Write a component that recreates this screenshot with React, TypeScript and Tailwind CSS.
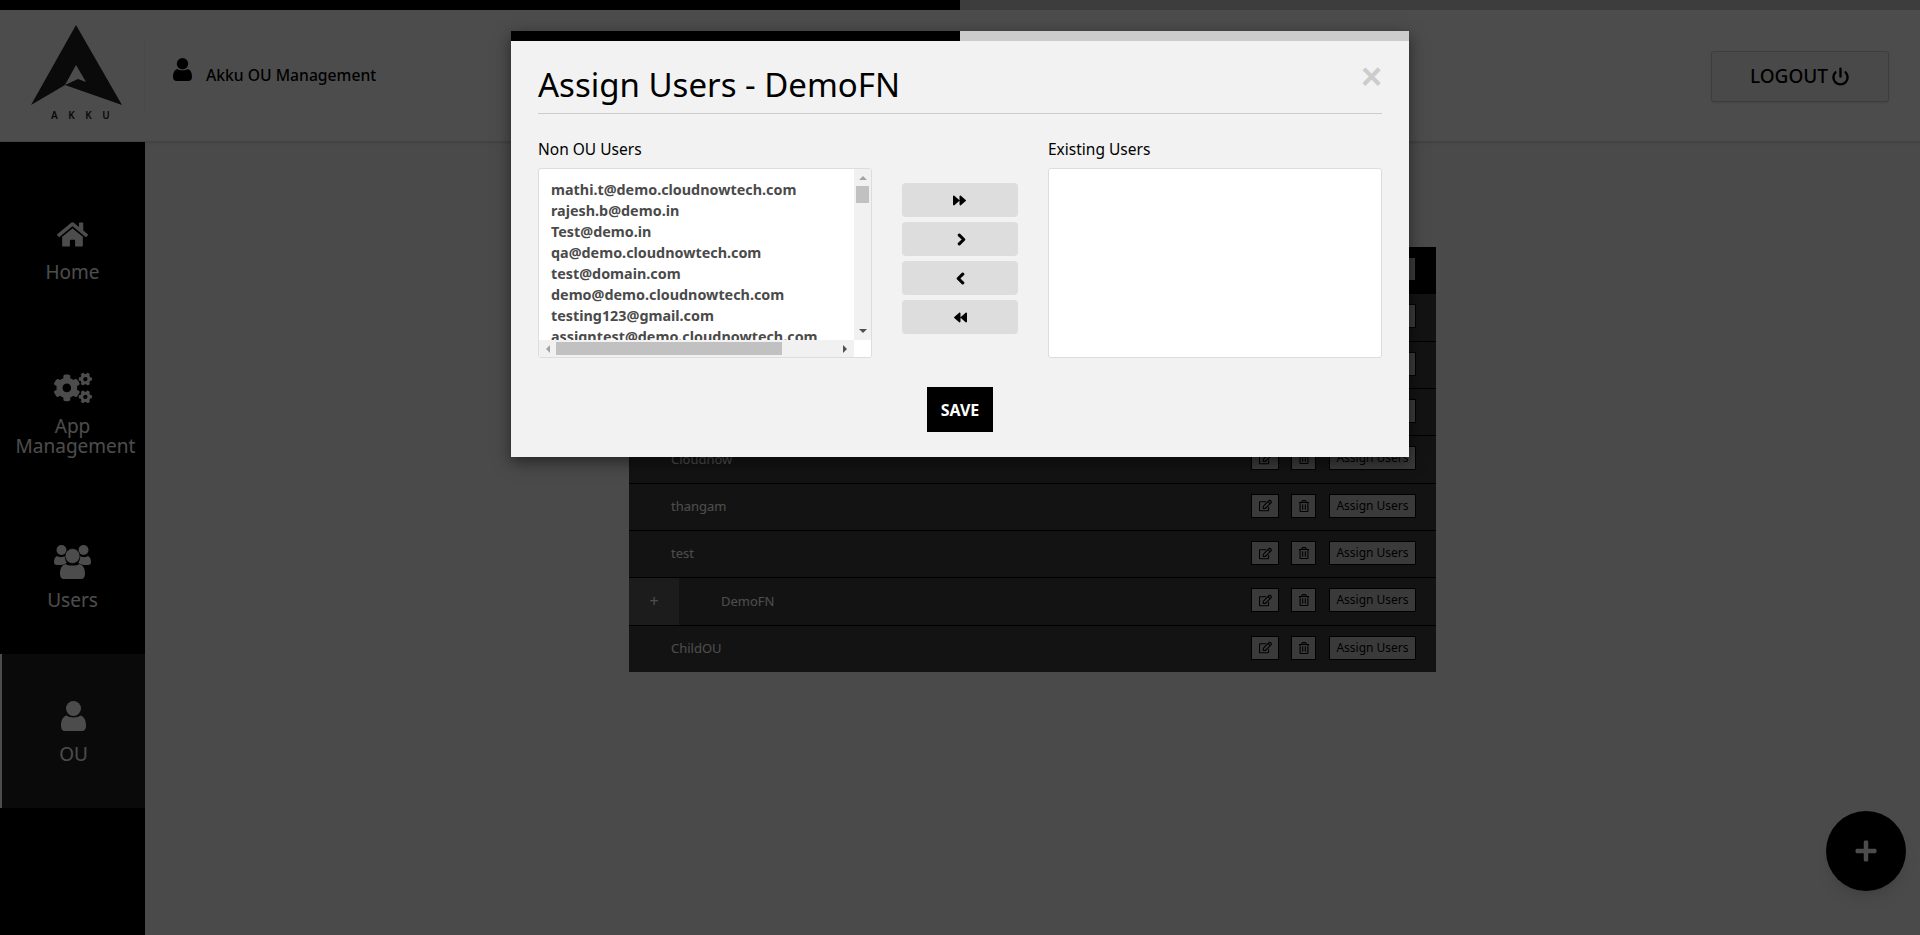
import { FaHome, FaCogs, FaRegEdit, FaRegTrashAlt, FaForward, FaBackward, FaChevronRight, FaChevronLeft, FaPlus } from "react-icons/fa";
import { FiPower } from "react-icons/fi";

const font = "font-['Noto_Sans',sans-serif]";

const emails = [
	"mathi.t@demo.cloudnowtech.com",
	"rajesh.b@demo.in",
	"Test@demo.in",
	"qa@demo.cloudnowtech.com",
	"test@domain.com",
	"demo@demo.cloudnowtech.com",
	"testing123@gmail.com",
	"assigntest@demo.cloudnowtech.com",
];

const rows = ["", "", "", "", "Cloudnow", "thangam", "test", "DemoFN", "ChildOU"];

function UserIcon({ className }: { className?: string }) {
	return (
		<svg viewBox="0 0 25 30" className={className} fill="currentColor">
			<circle cx="12.5" cy="7.5" r="7.5" />
			<path d="M5.5 14.5 C8 17 17 17 19.5 14.5 C23 15.5 25 19 25 25 C25 28 23.5 30 21 30 L4 30 C1.5 30 0 28 0 25 C0 19 2 15.5 5.5 14.5 Z" />
		</svg>
	);
}

function UsersIcon({ className }: { className?: string }) {
	return (
		<svg viewBox="0 0 37 34" className={className} fill="currentColor">
			<circle cx="7.5" cy="5" r="5" />
			<circle cx="29.5" cy="5" r="5" />
			<path d="M3 11 C5 12.5 9 12.5 11 11 C11 15 12 17 13 18 C10 19 8.5 20 7.5 20 L3 20 C1 20 0 19 0 17 C0 14 1 12 3 11 Z" />
			<path d="M34 11 C32 12.5 28 12.5 26 11 C26 15 25 17 24 18 C27 19 28.5 20 29.5 20 L34 20 C36 20 37 19 37 17 C37 14 36 12 34 11 Z" />
			<circle cx="18.5" cy="11" r="7.5" stroke="#000" strokeWidth="0.7" />
			<path d="M11.5 19 C14 21 23 21 25.5 19 C29 20 31 23 31 29 C31 32 29.5 34 27 34 L10 34 C7.5 34 6 32 6 29 C6 23 8 20 11.5 19 Z" />
		</svg>
	);
}

function NavItem({ icon, label, active }: { icon: React.ReactNode; label: React.ReactNode; active?: boolean }) {
	return (
		<div className={`flex flex-col items-center pt-[44px] pb-[44px] text-white ${active ? "bg-[#222] border-l-2 border-white" : ""}`}>
			<div className="h-[36px] flex items-center justify-center">{icon}</div>
			<div className="mt-[10px] text-[19px] leading-[20px] text-center">{label}</div>
		</div>
	);
}

function OuRow({ name, index }: { name: string; index: number }) {
	const child = name === "DemoFN";
	return (
		<div className={`flex-1 flex items-stretch border-b border-black last:border-b-0 ${index === 0 ? "bg-black" : "bg-[#404040]"}`}>
			{child && <div className="w-[50px] flex items-center justify-center bg-[#606060] text-white text-[16px]">+</div>}
			<div className="flex-1 flex items-center text-white text-[13px] pl-[42px]">{name}</div>
			<div className="flex items-center pr-[20px] pb-[2px] text-black">
				<button className="w-[28px] h-[24px] flex items-center justify-center bg-[#c4c4c4] border border-black">
					<FaRegEdit className="text-[13px]" />
				</button>
				<button className="ml-[12px] w-[25px] h-[24px] flex items-center justify-center bg-[#c4c4c4] border border-black">
					<FaRegTrashAlt className="text-[12px]" />
				</button>
				<button className="ml-[13px] w-[87px] h-[24px] flex items-center justify-center bg-[#c4c4c4] border border-black text-[12px]">
					Assign Users
				</button>
			</div>
		</div>
	);
}

function Triangle({ dir }: { dir: "up" | "down" | "left" | "right" }) {
	const cls = {
		up: "border-x-[4px] border-x-transparent border-b-[4px] border-b-[#a3a3a3]",
		down: "border-x-[4px] border-x-transparent border-t-[4px] border-t-[#505050]",
		left: "border-y-[4px] border-y-transparent border-r-[4px] border-r-[#a3a3a3]",
		right: "border-y-[4px] border-y-transparent border-l-[4px] border-l-[#505050]",
	}[dir];
	return <div className={`w-0 h-0 ${cls}`}></div>;
}

function ListBox() {
	return (
		<div className="relative h-[190px] bg-white border border-[#ddd] rounded-[3px] overflow-hidden">
			<div className="absolute left-[12px] top-[10px] text-[14.35px] leading-[21px] font-bold text-[#4a4a4a] whitespace-nowrap">
				{emails.map((email) => (
					<div key={email}>{email}</div>
				))}
			</div>
			<div className="absolute right-0 top-0 w-[17px] h-[171px] bg-[#f1f1f1] flex flex-col items-center justify-between py-[7px]">
				<Triangle dir="up" />
				<Triangle dir="down" />
				<div className="absolute top-[17px] left-[2px] w-[13px] h-[17px] bg-[#c1c1c1]"></div>
			</div>
			<div className="absolute left-0 bottom-0 right-[17px] h-[17px] bg-[#f1f1f1] flex items-center justify-between px-[7px]">
				<Triangle dir="left" />
				<Triangle dir="right" />
				<div className="absolute left-[17px] top-[2px] w-[226px] h-[13px] bg-[#c1c1c1]"></div>
			</div>
			<div className="absolute right-0 bottom-0 w-[17px] h-[17px] bg-white"></div>
		</div>
	);
}

function MoveButton({ children }: { children: React.ReactNode }) {
	return <button className="w-[116px] h-[34px] flex items-center justify-center bg-[#ddd] rounded-[4px] text-black">{children}</button>;
}

export default function App() {
	return (
		<div className={`relative h-[935px] overflow-hidden bg-[#f7f7f7] ${font}`}>
			<div className="flex h-[10px]">
				<div className="w-1/2 bg-black"></div>
				<div className="w-1/2 bg-[#ccc]"></div>
			</div>
			<header className="h-[132px] bg-white border-b border-[#ddd] shadow-sm flex items-center">
				<div className="relative w-[145px] h-[132px] shrink-0">
					<svg viewBox="0 0 145 132" className="w-[145px] h-[132px]">
						<path fillRule="evenodd" fill="#222" d="M76 15 L122 95 L65 75 L31 95 Z M76 55 L65 75 L78 69 L86 72 Z" />
					</svg>
					<div className="absolute left-[51px] top-[99px] text-[10px] leading-[12px] font-semibold tracking-[10.5px] text-[#222]">AKKU</div>
				</div>
				<div className="h-[74px] w-px bg-[#f4f4f4] -ml-px"></div>
				<UserIcon className="ml-[28px] w-[19px] h-[23px] text-black -mt-[12px]" />
				<div className="ml-[14px] text-[15.7px] font-medium text-black">Akku OU Management</div>
				<button className="ml-auto mr-[31px] mt-[2px] w-[178px] h-[51px] flex items-center justify-center gap-[3px] border border-[#ccc] rounded-[3px] bg-[#f4f4f4] text-black text-[19px] font-medium shadow-sm">
					LOGOUT
					<FiPower className="text-[19px] stroke-[3]" />
				</button>
			</header>
			<div className="flex h-[793px]">
				<aside className="w-[145px] shrink-0 bg-black pt-[30px]">
					<NavItem icon={<FaHome className="text-[31px]" />} label="Home" />
					<NavItem icon={<FaCogs className="text-[38px]" />} label={<>App<br /><span className="ml-[6px]">Management</span></>} />
					<NavItem icon={<UsersIcon className="w-[37px] h-[34px]" />} label="Users" />
					<NavItem active icon={<UserIcon className="w-[25px] h-[30px]" />} label="OU" />
				</aside>
				<main className="flex-1 pl-[484px] pt-[105px]">
					<div className="w-[807px] h-[425px] flex flex-col">
						{rows.map((name, i) => (
							<OuRow key={i} name={name} index={i} />
						))}
					</div>
				</main>
			</div>
			<button className="absolute right-[14px] bottom-[44px] w-[80px] h-[80px] rounded-full bg-black text-white flex items-center justify-center shadow-lg">
				<FaPlus className="text-[24px]" />
			</button>

			<div className="absolute inset-0 bg-black/70 flex justify-center pt-[31px]">
				<div className="w-[898px] h-[426px] bg-[#f2f2f2] shadow-[0_5px_15px_rgba(0,0,0,0.5)]">
					<div className="flex h-[10px]">
						<div className="w-1/2 bg-black"></div>
						<div className="w-1/2 bg-[#ccc]"></div>
					</div>
					<div className="px-[27px]">
						<div className="relative h-[73px] border-b border-[#ccc] flex items-center pt-[16px]">
							<h2 className="text-[33px] text-black">Assign Users - DemoFN</h2>
							<span className="absolute right-0 top-[18px] font-['Liberation_Sans',sans-serif] font-bold text-[36px] leading-[36px] text-[#ccc]">×</span>
						</div>
						<div className="flex mt-[25px]">
							<div className="w-[334px]">
								<div className="text-[15.5px] leading-[21px] text-black mb-[8px]">Non OU Users</div>
								<ListBox />
							</div>
							<div className="ml-[30px] mt-[44px] flex flex-col gap-[5px]">
								<MoveButton><FaForward className="text-[13px] -ml-[1px]" /></MoveButton>
								<MoveButton><FaChevronRight className="text-[13px] ml-[2px] stroke-[40]" /></MoveButton>
								<MoveButton><FaChevronLeft className="text-[13px] stroke-[40]" /></MoveButton>
								<MoveButton><FaBackward className="text-[13px] ml-[1px]" /></MoveButton>
							</div>
							<div className="ml-[30px] w-[334px]">
								<div className="text-[15.5px] leading-[21px] text-black mb-[8px]">Existing Users</div>
								<div className="h-[190px] bg-white border border-[#ddd] rounded-[3px]"></div>
							</div>
						</div>
						<div className="flex justify-center mt-[29px]">
							<button className="w-[66px] h-[45px] bg-black text-white text-[16px] font-bold">SAVE</button>
						</div>
					</div>
				</div>
			</div>
		</div>
	);
}
